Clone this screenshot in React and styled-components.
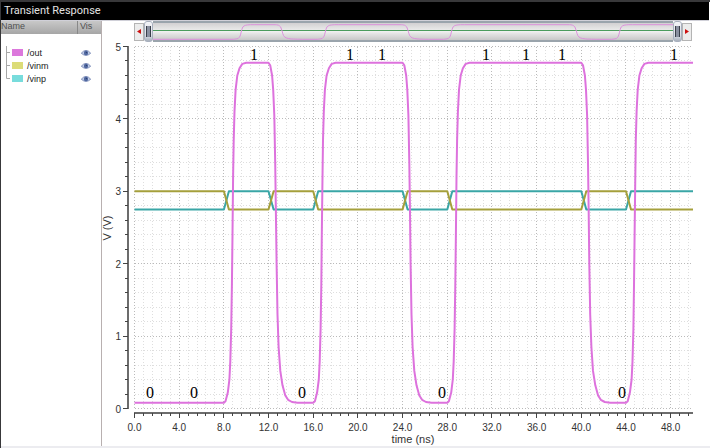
import React, { useState } from 'react';
import styled, { createGlobalStyle } from 'styled-components';

const GlobalStyle = createGlobalStyle`
  * {
    box-sizing: border-box;
  }
  body {
    margin: 0;
    background: #ffffff;
    font-family: Roboto, "Liberation Sans", sans-serif;
  }
`;

const Viewer = styled.div`
  display: flex;
  flex-direction: column;
  min-height: 100vh;
  border-top: 2px solid #38383a;
  border-left: 1px solid #38383a;
`;

const TitleBar = styled.h1`
  margin: 0 1px 0 0;
  padding: 0 3px;
  height: 18px;
  line-height: 18px;
  font-size: 11px;
  font-weight: 400;
  color: #e2e2e2;
  background: #000000;
`;

const Body = styled.div`
  display: flex;
  flex: 1;
  margin-right: 1px;
  border-top: 1px solid #d0d0d8;
`;

const Sidebar = styled.aside`
  flex: 0 0 101px;
  border-right: 1px solid #b8b0b0;
`;

const SignalTable = styled.table`
  width: 100%;
  table-layout: fixed;
  border-collapse: collapse;
  font-family: "Liberation Sans", sans-serif;
  font-size: 9px;
  color: #222222;

  th, td {
    padding: 0;
    text-align: left;
    font-weight: 400;
  }
  thead tr {
    height: 13px;
    background: linear-gradient(#c8c8c8, #a6a6a6);
  }
  tbody::before {
    content: '';
    display: block;
    height: 12px;
  }
  tbody tr {
    height: 13px;
  }
`;

const HeadCell = styled.th`
  width: ${({ $width }) => $width || 'auto'};
  line-height: 11px;
  color: #505050;
  vertical-align: top;
  border-left: ${({ $divided }) => ($divided ? '1px solid #888888' : 'none')};
`;

const Signal = styled.div`
  display: flex;
  align-items: center;
  height: 13px;
  padding-left: 4px;
`;

const Branch = styled.svg`
  width: 7px;
  height: 13px;
`;

const Swatch = styled.span`
  width: 11px;
  height: 7px;
  margin-right: 4px;
  background: ${({ $color }) => $color};
`;

const EyeButton = styled.button`
  display: flex;
  align-items: center;
  height: 13px;
  margin: 0;
  padding: 0 0 0 4px;
  border: none;
  background: none;
  cursor: pointer;

  svg {
    width: 10px;
    height: 8px;
    opacity: ${({ $on }) => ($on ? 1 : 0.3)};
  }
`;

const Plot = styled.main`
  flex: 1;
  min-width: 0;
`;

const RangeBar = styled.div`
  display: flex;
  align-items: center;
  height: 21px;
  margin: 0 17px 0 32px;
`;

const ArrowButton = styled.button`
  display: flex;
  align-items: center;
  justify-content: center;
  width: 10px;
  height: 18px;
  padding: 0;
  border: 1px solid #b4b4b4;
  background: #ececec;
  cursor: pointer;

  svg {
    width: 4px;
    height: 5px;
  }
`;

const Handle = styled.button`
  display: flex;
  align-items: center;
  justify-content: center;
  width: 9px;
  height: 21px;
  padding: 0;
  border: 1px solid #a8b0be;
  border-radius: 3px;
  background: linear-gradient(#f4f4f8, #dcdfe6 70%, #a8b0bc);
  cursor: ew-resize;

  &::before {
    content: '';
    width: 3px;
    height: 11px;
    border: solid #3a3f4a;
    border-width: 0 1px;
    background: #8a90a0;
  }
`;

const Track = styled.div`
  flex: 1;
  min-width: 0;
  height: 21px;
  border: solid #9aa4ac;
  border-width: 2px 0;
  background: linear-gradient(#d2d0d2, #dedede 22%, #f0f0f0 50%, #e2e2e2 65%, #c8c8c8);

  svg {
    display: block;
    width: 100%;
    height: 17px;
  }
`;

const Chart = styled.svg`
  display: block;
  width: 100%;
  height: auto;
  font-family: "Liberation Sans", sans-serif;
  font-size: 10px;
  fill: #333333;
`;

const AxisTitle = styled.text`
  font-size: 11px;
  text-anchor: middle;
`;

const Bit = styled.text`
  font-family: "Liberation Serif", serif;
  font-size: 16px;
  fill: #000000;
  text-anchor: middle;
`;

const BottomEdge = styled.div`
  height: 2px;
  background: #ececf0;
`;

const signals = [
  { name: '/out', color: '#dd72dd', swatch: '#dc78dc' },
  { name: '/vinm', color: '#a5a03c', swatch: '#dcdc78' },
  { name: '/vinp', color: '#3aa6a6', swatch: '#78dcdc' },
];

// plot area inside the 607 x 403 chart
const X0 = 32.5;
const Y0 = 366.5;
const PX_PER_NS = 11.17;
const PX_PER_V = 72.4;
const END = 50;

const xOf = (ns) => X0 + ns * PX_PER_NS;
const yOf = (v) => Y0 - v * PX_PER_V;

// times at which both inputs swap, in ns
const edges = [8, 12, 16, 24, 28, 40, 44];

// [ns after the edge, volts]
const rise = [
  [0, 0.08], [0.15, 0.1], [0.35, 0.22], [0.5, 0.4], [0.58, 0.65], [0.66, 1.1],
  [0.72, 1.7], [0.77, 2.4], [0.83, 3.2], [0.88, 3.7], [0.95, 4.1], [1.05, 4.4],
  [1.2, 4.6], [1.4, 4.7], [1.65, 4.76], [2, 4.775],
];
const fall = [
  [0, 4.775], [0.15, 4.74], [0.32, 4.6], [0.42, 4.4], [0.52, 4.05], [0.6, 3.4],
  [0.66, 2.7], [0.72, 2], [0.8, 1.3], [0.9, 0.85], [1.05, 0.52], [1.25, 0.32],
  [1.5, 0.18], [1.75, 0.12], [2.1, 0.09], [2.6, 0.08],
];

const outPoints = [[0, 0.08]];
edges.forEach((t, i) => {
  (i % 2 === 0 ? rise : fall).forEach(([dt, v]) => outPoints.push([t + dt, v]));
});
outPoints.push([END, 4.775]);

const inputPoints = (first, second) => {
  const points = [[0, first]];
  edges.forEach((t, i) => {
    points.push([t, i % 2 === 0 ? first : second]);
    points.push([t + 0.45, i % 2 === 0 ? second : first]);
  });
  points.push([END, second]);
  return points;
};

const traces = {
  '/out': outPoints,
  '/vinm': inputPoints(3, 2.75),
  '/vinp': inputPoints(2.75, 3),
};

const toPoints = (points) => points.map(([t, v]) => `${xOf(t).toFixed(1)},${yOf(v).toFixed(1)}`).join(' ');

// the range bar shows the same trace, scaled down
const overview = outPoints.map(([t, v]) => `${(t * 10.55 - 4).toFixed(1)},${(16.5 - v * 3.1).toFixed(1)}`).join(' ');

const bits = [
  ['0', 48], ['0', 92], ['1', 152], ['0', 200], ['1', 248], ['1', 280], ['0', 340],
  ['1', 384], ['1', 424], ['1', 460], ['0', 520], ['1', 572],
];

const range = (n) => [...Array(n).keys()];

function Grid() {
  return (
    <g fill="none" shapeRendering="crispEdges" strokeDasharray="1 2">
      {range(63).map((i) => (
        <path key={`v${i}`} d={`M${xOf(i * 0.8)} 4.5V366.5`} stroke={i % 5 ? '#dedede' : '#bababa'} />
      ))}
      {range(26).map((i) => (
        <path key={`h${i}`} d={`M${X0} ${yOf(i * 0.2)}H590`} stroke={i % 5 ? '#dedede' : '#bababa'} />
      ))}
    </g>
  );
}

function Axes() {
  return (
    <g>
      <g fill="none" stroke="#444444" shapeRendering="crispEdges">
        <path d="M26 4V367" stroke="#6c6c6c" strokeWidth="2" />
        <path d="M32 371H591" stroke="#6c6c6c" strokeWidth="2" />
        {range(26).map((i) => (
          <path key={`y${i}`} d={`M${i % 5 ? 23 : 21} ${yOf(i * 0.2)}H26`} />
        ))}
        {range(63).map((i) => (
          <path key={`x${i}`} d={`M${xOf(i * 0.8)} 371V${i % 5 ? 374 : 376}`} />
        ))}
      </g>
      {range(6).map((v) => (
        <text key={v} x="19" y={yOf(v) + 4} textAnchor="end">{v}</text>
      ))}
      {range(13).map((i) => (
        <text key={i} x={xOf(i * 4)} y="389" textAnchor="middle">{(i * 4).toFixed(1)}</text>
      ))}
      <AxisTitle x="311" y="401">time (ns)</AxisTitle>
      <AxisTitle transform="translate(9 186) rotate(-90)">V (V)</AxisTitle>
    </g>
  );
}

function Eye() {
  return (
    <svg viewBox="0 0 10 8">
      <path d="M0.3 4.2Q5 -1.4 9.7 4.2Q5 8.6 0.3 4.2Z" fill="#c4d0e8" stroke="#7888b4" strokeWidth="0.9" />
      <circle cx="5" cy="4" r="2.2" fill="#5068a0" />
      <circle cx="5.4" cy="3.6" r="0.7" fill="#2c3c68" />
    </svg>
  );
}

export default function App() {
  const [hidden, setHidden] = useState([]);

  const toggle = (name) => {
    setHidden(hidden.includes(name) ? hidden.filter((n) => n !== name) : [...hidden, name]);
  };

  return (
    <>
      <GlobalStyle />
      <Viewer>
        <TitleBar>Transient Response</TitleBar>
        <Body>
          <Sidebar>
            <SignalTable>
              <thead>
                <tr>
                  <HeadCell>Name</HeadCell>
                  <HeadCell $width="24px" $divided>&nbsp;Vis</HeadCell>
                </tr>
              </thead>
              <tbody>
                {signals.map(({ name, swatch }, i) => (
                  <tr key={name}>
                    <td>
                      <Signal>
                        <Branch viewBox="0 0 7 13">
                          <path
                            d={i === signals.length - 1 ? 'M1.5 0V6.5H5' : 'M1.5 0V13M1.5 6.5H5'}
                            fill="none"
                            stroke="#a8a8a8"
                          />
                        </Branch>
                        <Swatch $color={swatch} />
                        {name}
                      </Signal>
                    </td>
                    <td>
                      <EyeButton
                        type="button"
                        aria-label={`Toggle ${name}`}
                        $on={!hidden.includes(name)}
                        onClick={() => toggle(name)}
                      >
                        <Eye />
                      </EyeButton>
                    </td>
                  </tr>
                ))}
              </tbody>
            </SignalTable>
          </Sidebar>
          <Plot>
            <RangeBar>
              <ArrowButton type="button" aria-label="Scroll left">
                <svg viewBox="0 0 4 5"><path d="M4 0V5L0 2.5Z" fill="#cc1010" /></svg>
              </ArrowButton>
              <Handle type="button" aria-label="Range start" />
              <Track>
                <svg viewBox="0 0 522 17" preserveAspectRatio="none">
                  <path d="M0 7.5H522" stroke="#4a9c5c" strokeWidth="1" />
                  <polyline points={overview} fill="none" stroke="#dc90dc" />
                </svg>
              </Track>
              <Handle type="button" aria-label="Range end" />
              <ArrowButton type="button" aria-label="Scroll right">
                <svg viewBox="0 0 4 5"><path d="M0 0V5L4 2.5Z" fill="#cc1010" /></svg>
              </ArrowButton>
            </RangeBar>
            <Chart viewBox="0 0 607 403">
              <Grid />
              <Axes />
              {['/vinp', '/vinm', '/out'].filter((name) => !hidden.includes(name)).map((name) => (
                <polyline
                  key={name}
                  points={toPoints(traces[name])}
                  fill="none"
                  stroke={signals.find((s) => s.name === name).color}
                  strokeWidth="2"
                  strokeLinejoin="round"
                />
              ))}
              {bits.map(([bit, x]) => (
                <Bit key={x} x={x} y={bit === '1' ? 18 : 356}>{bit}</Bit>
              ))}
            </Chart>
          </Plot>
        </Body>
        <BottomEdge />
      </Viewer>
    </>
  );
}
